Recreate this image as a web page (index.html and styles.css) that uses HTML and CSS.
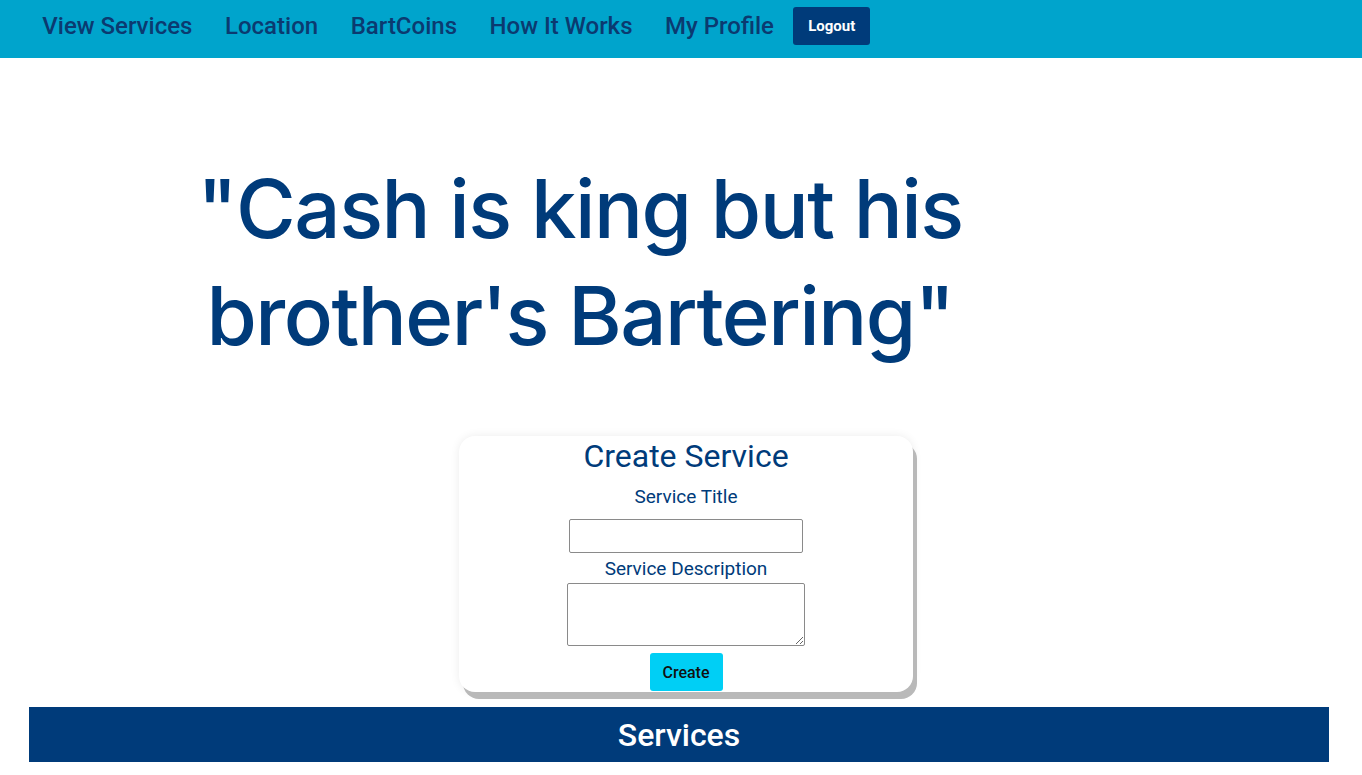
FILE: index.html
```html
<!DOCTYPE html>
<html lang="en">
<head>
<meta charset="utf-8">
<title>Barter</title>
<link rel="stylesheet" href="styles.css">
</head>
<body>
<nav class="navbar">
  <a class="nav-link" href="#">View Services</a>
  <a class="nav-link" href="#">Location</a>
  <a class="nav-link" href="#">BartCoins</a>
  <a class="nav-link" href="#">How It Works</a>
  <a class="nav-link" href="#">My Profile</a>
  <button class="logout-btn" type="button">Logout</button>
</nav>

<section class="hero">
  <h1 class="hero-quote">"Cash is king but his brother's Bartering"</h1>
</section>

<section class="create-wrap">
  <form class="create-card">
    <h2 class="card-title">Create Service</h2>
    <label class="field-label" for="title">Service Title</label>
    <input class="field-input" id="title" type="text">
    <label class="field-label desc-label" for="desc">Service Description</label>
    <textarea class="field-textarea" id="desc"></textarea>
    <button class="create-btn" type="button">Create</button>
  </form>
</section>

<section class="services-bar">
  <h2 class="services-title">Services</h2>
</section>
</body>
</html>
```
FILE: styles.css
```css
* { box-sizing: border-box; }

body {
  margin: 0;
  background: #ffffff;
  font-family: Roboto, "Open Sans", sans-serif;
  color: #003b7a;
}

.navbar {
  height: 58px;
  background: #00a4cc;
  display: flex;
  align-items: center;
  padding: 0 0 6px 26px;
}

.nav-link {
  color: #0b3a70;
  text-decoration: none;
  font-size: 24px;
  font-weight: 500;
  padding: 0 16.3px;
  line-height: 1;
}

.logout-btn {
  margin-left: 3px;
  background: #003b7a;
  color: #ffffff;
  border: none;
  border-radius: 3px;
  font-family: Roboto, sans-serif;
  font-weight: 700;
  font-size: 15px;
  width: 77px;
  height: 38px;
}

.hero {
  display: flex;
  justify-content: flex-start;
  padding: 97px 0 0 160px;
}

.hero-quote {
  width: 840px;
  margin: 0;
  text-align: center;
  font-family: Inter, "Liberation Sans", sans-serif;
  font-weight: 500;
  font-size: 81.5px;
  line-height: 107px;
  letter-spacing: -1.5px;
  color: #003b7a;
}

.create-wrap {
  display: flex;
  justify-content: center;
  padding: 67px 0 0 10px;
}

.create-card {
  width: 454px;
  height: 256px;
  background: #ffffff;
  border-radius: 16px;
  box-shadow: 4px 7px 0 #b9b9b9, 0 0 10px rgba(0,0,0,0.08);
  display: flex;
  flex-direction: column;
  align-items: center;
  padding-top: 1px;
}

.card-title {
  margin: 0;
  font-size: 32px;
  font-weight: 400;
  line-height: 38px;
  color: #003b7a;
}

.field-label {
  font-size: 19px;
  font-weight: 400;
  line-height: 22px;
  margin-top: 11px;
  color: #003b7a;
}

.field-input {
  margin-top: 11px;
  width: 234px;
  height: 34px;
  border: 1px solid #8a8a8a;
  border-radius: 2px;
}

.desc-label { margin-top: 5px; }

.field-textarea {
  margin-top: 3px;
  width: 238px;
  height: 63px;
  border: 1px solid #8a8a8a;
  border-radius: 2px;
  resize: both;
}

.create-btn {
  margin-top: 7px;
  width: 73px;
  height: 38px;
  background: #00cff5;
  border: none;
  border-radius: 3px;
  font-family: Roboto, sans-serif;
  font-size: 16px;
  font-weight: 500;
  color: #111111;
}

.services-bar {
  margin: 15px 33px 0 29px;
  height: 55px;
  background: #003b7a;
  display: flex;
  align-items: center;
  justify-content: center;
}

.services-title {
  margin: 0;
  color: #ffffff;
  font-size: 32px;
  font-weight: 500;
}
```
